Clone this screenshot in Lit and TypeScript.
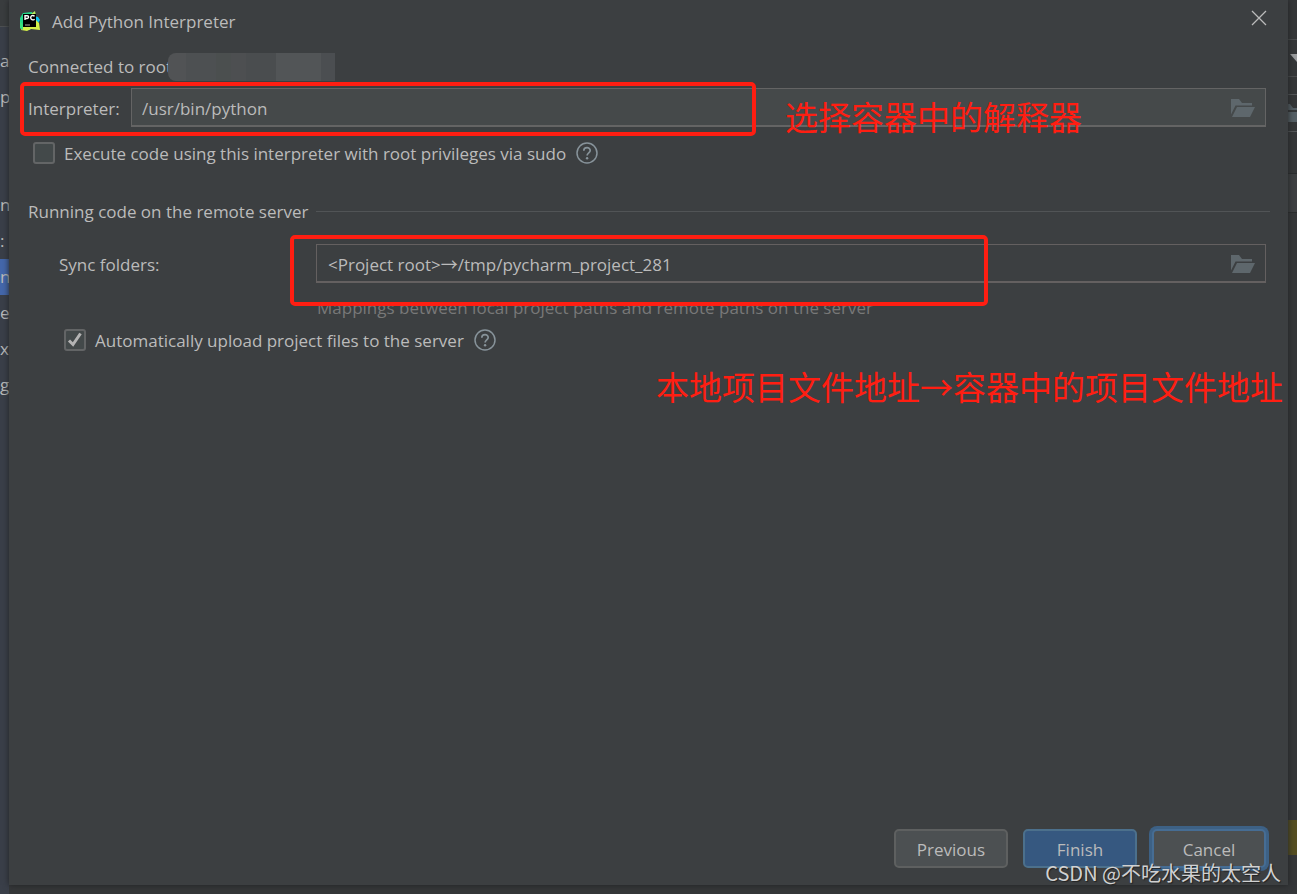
import { LitElement, html, css } from "lit";
import { customElement, property } from "lit/decorators.js";

const folderIcon = html`<svg class="folder" viewBox="0 0 24 18" width="24" height="18" aria-hidden="true">
  <path d="M0 0H8L11 4H21V6.500H4.500L0 15.500Z" fill="#5e676c"/>
  <path d="M6 8H24L19 18H1Z" fill="#5e676c"/>
</svg>`;

const helpIcon = html`<svg viewBox="0 0 22 22" width="22" height="22" aria-hidden="true">
  <circle cx="11" cy="11" r="10" fill="none" stroke="#87939a" stroke-width="1.500"/>
  <path d="M7.800 8.800C7.800 4.600 14.200 4.600 14.200 8.500C14.200 10.800 11.100 10.900 11.100 13.500" fill="none" stroke="#87939a" stroke-width="1.700"/>
  <circle cx="11.100" cy="16.300" r="1.200" fill="#87939a"/>
</svg>`;

const appIcon = html`<svg viewBox="0 0 20 20" width="20" height="20" aria-hidden="true">
  <path d="M3 2L12 1L14 10L10 19H3L0 17L0 7Z" fill="#21d789"/>
  <path d="M11 3L15 0L16 5Z" fill="#b8f05a"/>
  <path d="M14 5L18 6L20 9L17 14Z" fill="#07c3f2"/>
  <path d="M16 9L19 12L20 19L11 18L7 20L1 19L3 15H16Z" fill="#d4f04a"/>
  <path d="M0 10L3 14L3 19L0 17Z" fill="#3be07c"/>
  <rect x="3" y="3" width="13" height="13" fill="#000"/>
  <path d="M5 9V4.700H7.200A1.300 1.300 0 0 1 7.200 7.500H5M14.600 5.300C12.600 3.600 10.700 4.900 10.700 6.700S12.700 9.700 14.600 8.200" fill="none" stroke="#fff" stroke-width="1.400"/>
  <path d="M5 14H10" stroke="#aaa" stroke-width="1"/>
</svg>`;

@customElement("help-button")
export class HelpButton extends LitElement {
  @property() label = "Help";
  static styles = css`
    :host { display: flex; }
    button { display: flex; padding: 0; border: 0; background: none; }
  `;
  render() {
    return html`<button type="button" aria-label=${this.label}>${helpIcon}</button>`;
  }
}

@customElement("path-field")
export class PathField extends LitElement {
  @property() label = "";
  @property() value = "";
  @property({ type: Boolean, reflect: true }) indented = false;
  static styles = css`
    :host { display: grid; grid-template-columns: 103px 1fr; align-items: center; }
    :host([indented]) { grid-template-columns: 257px 1fr; }
    label { padding-top: 2px; }
    .box {
      display: flex; align-items: center; height: 39px; box-sizing: border-box;
      border: 1px solid #646464; border-bottom-width: 2px; background: #45494a; padding-right: 10px;
    }
    :host([indented]) .box { background: none; border-color: #646060; }
    input {
      flex: 1; min-width: 0; height: 100%; box-sizing: border-box; padding: 2px 10px 0; border: 0; outline: 0;
      background: none; color: inherit; font: inherit;
    }
    :host([indented]) input { padding: 1px 11px 0; }
    button { display: flex; padding: 2px 0 0; border: 0; background: none; }
  `;
  render() {
    return html`
      <label for="path">${this.label}</label>
      <div class="box">
        <input id="path" type="text" .value=${this.value} />
        <button type="button" aria-label="Browse">${folderIcon}</button>
      </div>`;
  }
}

@customElement("check-option")
export class CheckOption extends LitElement {
  @property() label = "";
  @property({ type: Boolean }) checked = false;
  static styles = css`
    :host { display: flex; align-items: center; gap: 10px; }
    label { display: flex; align-items: center; gap: 9px; }
    .text { padding-top: 2px; }
    .tick { position: relative; display: flex; }
    input {
      appearance: none; width: 22px; height: 22px; margin: 0; box-sizing: border-box;
      border: 2px solid #636566; border-radius: 3px; background: #43494a;
    }
    svg { position: absolute; inset: 0; pointer-events: none; display: none; }
    input:checked + svg { display: block; }
  `;
  render() {
    return html`
      <label>
        <span class="tick">
          <input type="checkbox" .checked=${this.checked} />
          <svg viewBox="0 0 22 22" width="22" height="22"><path d="M5 11.500L9 15.500L16.500 4.500" fill="none" stroke="#b4b4b4" stroke-width="3"/></svg>
        </span>
        <span class="text">${this.label}</span>
      </label>
      <help-button label="Help"></help-button>`;
  }
}

@customElement("app-root")
export class AppRoot extends LitElement {
  static styles = css`
    :host {
      display: block; position: relative; overflow: hidden; min-height: 100vh; background: #353739;
      color: #bbbbbb; font: 17px/24px "Open Sans", "Noto Sans CJK SC", sans-serif;
    }
    .desk { display: grid; grid-template-columns: 9px 1fr 9px; min-height: 100vh; }
    .tree { background: #3a3f49; }
    .toolbar { height: 26px; background: #3a3d3f; border-bottom: 1px solid #4d5052; margin-bottom: 16px; }
    .tree .row { height: 36px; line-height: 36px; white-space: nowrap; display: flex; }
    .tree .selected { background: #4467ab; }
    .dialog {
      display: flex; flex-direction: column; margin-bottom: 9px; background: #3c3f41;
      box-shadow: 0 0 6px #202224; z-index: 1;
    }
    .title { display: flex; align-items: center; gap: 12px; height: 42px; padding: 0 21px 0 11px; }
    .title h1 { flex: 1; margin: 0; padding-top: 2px; font: inherit; }
    .title button { display: flex; padding: 0 0 7px; border: 0; background: none; }
    .body { flex: 1; padding: 13px 22px 0 19px; }
    .host { display: flex; align-items: center; height: 24px; }
    .masked {
      width: 167px; height: 28px; margin-left: -4px; border-radius: 8px 0 0 8px;
      background: linear-gradient(90deg, #515355 0 18px, #4d5052 18px 48px, #4b4f4f 48px 63px, #4d4f51 63px 78px, #4a4d4f 78px 108px, #525557 108px 153px, #4b4e51 153px);
    }
    .interpreter { margin-top: 9px; }
    .sudo { margin: 13px 0 0 5px; }
    .section { display: flex; align-items: center; gap: 8px; margin: 32px -4px 20px 0; }
    .section h2 { margin: 0; padding-top: 2px; font: inherit; }
    .section hr { flex: 1; border: 0; height: 1px; margin: 0; background: #515456; }
    .sync { margin-left: 31px; }
    .note { margin: 13px 0 7px 289px; color: #787878; }
    .upload { margin-left: 36px; }
    .actions { display: flex; justify-content: flex-end; gap: 15px; padding: 0 22px 17px; }
    .actions button {
      width: 114px; height: 39px; border: 2px solid #5e6060; border-radius: 5px; padding: 2px 0 0;
      background: #4c5052; color: inherit; font: inherit;
    }
    .actions .primary { background: #365880; border-color: #4c708c; }
    .actions .focused { border-color: #466d94; box-shadow: 0 0 0 3px #3d6185; }
    .side { display: flex; flex-direction: column; background: #353739; }
    .side .combo { height: 36px; margin-top: 39px; border: solid #4b4d4f; border-width: 1px 0; display: flex; align-items: center; justify-content: flex-end; }
    .side .field { height: 36px; margin-top: 17px; border: solid #55585a; border-width: 1px 0; display: flex; align-items: center; justify-content: flex-end; }
    .side .band { height: 38px; margin-top: 41px; background: #3e4042; border: solid #2b2d2e; border-width: 1px 0; }
    .side .notice { height: 35px; margin-top: auto; margin-bottom: 39px; background: #564f22; }
    .frame { position: absolute; box-sizing: border-box; border: 4px solid #ff1e12; border-radius: 5px; z-index: 2; pointer-events: none; }
    .frame-a { left: 20px; top: 82px; width: 736px; height: 54px; }
    .frame-b { left: 290px; top: 235px; width: 698px; height: 71px; }
    .remark {
      position: absolute; z-index: 2; color: #ff1e12; font: 33px/40px "Noto Sans CJK SC", sans-serif; white-space: nowrap;
    }
    .remark-a { left: 785px; top: 96px; }
    .remark-b { left: 656px; top: 366px; }
    .mark {
      position: absolute; z-index: 3; right: 16px; bottom: 8px; color: #d0d1d2; text-shadow: 1px 1px 1px #222;
      font: 20px/26px "Noto Sans CJK SC", sans-serif; white-space: nowrap;
    }
  `;
  render() {
    return html`
      <div class="desk">
        <div class="tree">
          <div class="toolbar"></div>
          <div class="row">a</div><div class="row">p</div><div class="row"></div><div class="row"></div>
          <div class="row">n</div><div class="row">:</div><div class="row selected">nc</div>
          <div class="row">e</div><div class="row">x</div><div class="row">g</div>
        </div>
        <main class="dialog">
          <header class="title">
            ${appIcon}
            <h1>Add Python Interpreter</h1>
            <button type="button" aria-label="Close">
              <svg viewBox="0 0 16 16" width="16" height="16"><path d="M1 1L15 15M15 1L1 15" stroke="#bbb" stroke-width="1.300"/></svg>
            </button>
          </header>
          <section class="body">
            <div class="host">Connected to root<span class="masked"></span></div>
            <path-field class="interpreter" label="Interpreter:" value="/usr/bin/python"></path-field>
            <check-option class="sudo" label="Execute code using this interpreter with root privileges via sudo"></check-option>
            <div class="section"><h2>Running code on the remote server</h2><hr /></div>
            <path-field class="sync" indented label="Sync folders:" value="<Project root>→/tmp/pycharm_project_281"></path-field>
            <div class="note">Mappings between local project paths and remote paths on the server</div>
            <check-option class="upload" checked label="Automatically upload project files to the server"></check-option>
          </section>
          <footer class="actions">
            <button type="button">Previous</button>
            <button type="button" class="primary">Finish</button>
            <button type="button" class="focused">Cancel</button>
          </footer>
        </main>
        <div class="side">
          <div class="combo"><svg viewBox="0 0 7 8" width="7" height="8"><path d="M0 0H7V8Z" fill="#9a9c9e"/></svg></div>
          <div class="field"><svg viewBox="0 0 9 18" width="9" height="18"><path d="M0 0H2L5 4H9V6H0ZM0 8H9V18H0Z" fill="#566066"/></svg></div>
          <div class="band"></div>
          <div class="notice"></div>
        </div>
      </div>
      <div class="frame frame-a"></div>
      <div class="frame frame-b"></div>
      <div class="remark remark-a">选择容器中的解释器</div>
      <div class="remark remark-b">本地项目文件地址→容器中的项目文件地址</div>
      <div class="mark">CSDN @不吃水果的太空人</div>
    `;
  }
}
